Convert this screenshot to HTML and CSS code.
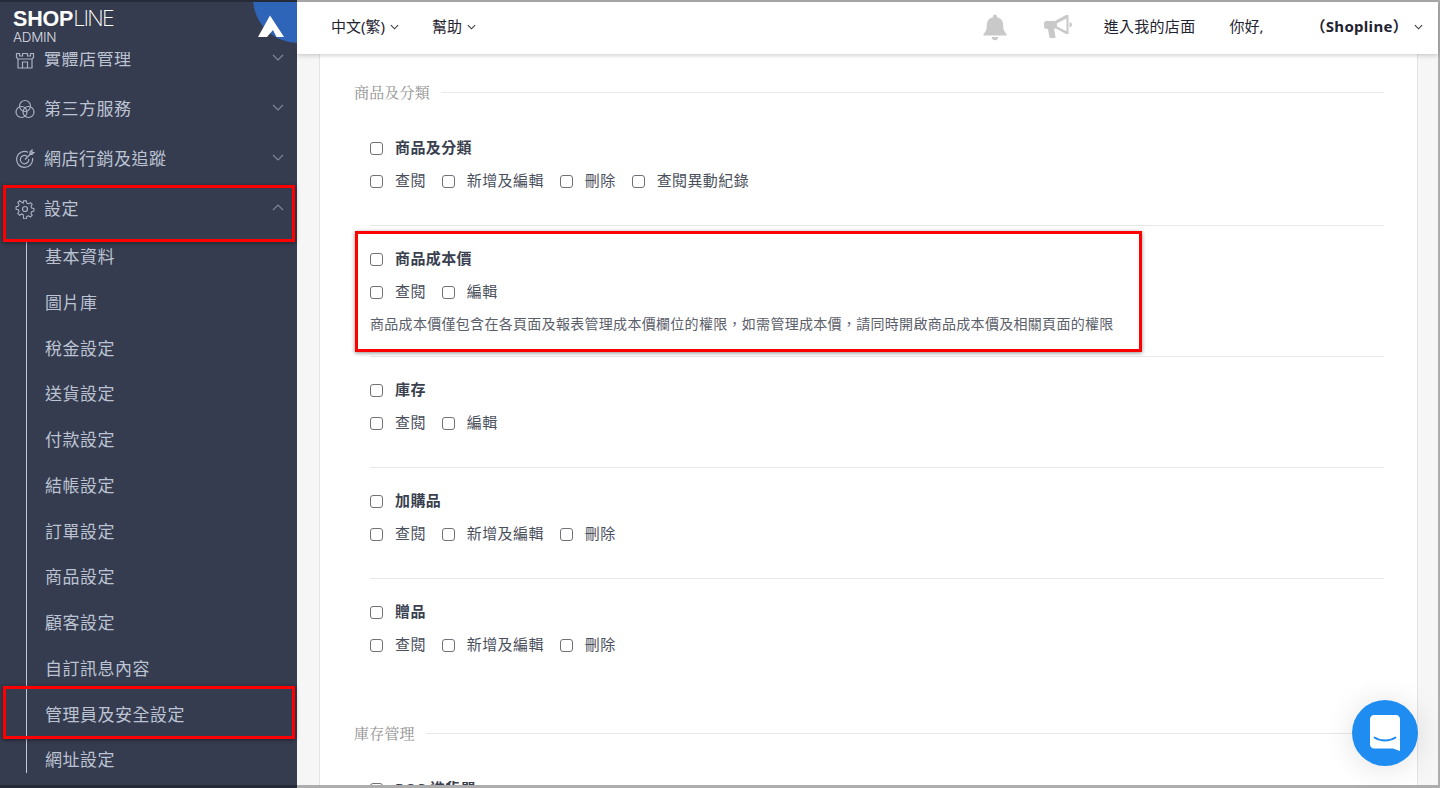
FILE: index.html
```html
<!DOCTYPE html>
<html lang="zh-Hant">
<head>
<meta charset="utf-8">
<title>SHOPLINE Admin</title>
<link rel="stylesheet" href="styles.css">
</head>
<body>
<div class="frame">
  <aside class="sidebar">
    <div class="brand">
      <div class="wordmark"><span class="wm-bold">SHOP</span><span class="wm-light">LINE</span></div>
      <div class="admin">ADMIN</div>
      <svg class="corner" width="60" height="50" viewBox="0 0 60 50">
        <circle cx="61" cy="-4" r="45" fill="#2f65b8"/>
        <path d="M21 35 L33 13.500 L47 35 H39.500 L36 28 L30 35 Z" fill="#fff"/>
      </svg>
    </div>
    <nav class="nav">
      <div class="item">
        <svg class="ico" viewBox="0 0 20 20"><path d="M1.500 4.500h3v2.500h3V4.500h5V7h3V4.500h3v4l-1.500 1.500v9h-14v-9l-1.500-1.500zM3 10h14M7.500 19v-6h5v6"/></svg>
        <span class="item-label">實體店管理</span>
        <svg class="chev" viewBox="0 0 12 7"><path d="M1 1l5 5 5-5"/></svg>
      </div>
      <div class="item">
        <svg class="ico" viewBox="0 0 20 20"><circle cx="10" cy="7" r="5.500"/><circle cx="6.500" cy="13" r="5.500"/><circle cx="13.500" cy="13" r="5.500"/></svg>
        <span class="item-label">第三方服務</span>
        <svg class="chev" viewBox="0 0 12 7"><path d="M1 1l5 5 5-5"/></svg>
      </div>
      <div class="item">
        <svg class="ico" viewBox="0 0 20 20"><path d="M13 3.200A8 8 0 1 0 17.500 9M12 7.200A4.200 4.200 0 1 0 13.700 10M10 10.500l7-7M15 5.500V3l2-2v2.500h2l-2 2z"/></svg>
        <span class="item-label">網店行銷及追蹤</span>
        <svg class="chev" viewBox="0 0 12 7"><path d="M1 1l5 5 5-5"/></svg>
      </div>
      <div class="item">
        <svg class="ico" viewBox="0 0 20 20"><circle cx="10" cy="10" r="2.500"/><path d="M8.500 1.500h3l.5 2.500 1.800.8 2.200-1.400 2 2-1.400 2.200.8 1.800 2.500.5v3l-2.500.5-.8 1.800 1.400 2.200-2 2-2.200-1.400-1.800.8-.5 2.500h-3L8 16.800 6.200 16 4 17.400l-2-2 1.400-2.200L2.600 11.400.1 10.900v-3l2.500-.5.800-1.800L2 3.400l2-2 2.200 1.400L8 4z" transform="translate(1 0) scale(.9 .9) translate(0 .6)"/></svg>
        <span class="item-label">設定</span>
        <svg class="chev" viewBox="0 0 12 7"><path d="M1 6l5-5 5 5"/></svg>
      </div>
      <ul class="sub">
        <li>基本資料</li>
        <li>圖片庫</li>
        <li>稅金設定</li>
        <li>送貨設定</li>
        <li>付款設定</li>
        <li>結帳設定</li>
        <li>訂單設定</li>
        <li>商品設定</li>
        <li>顧客設定</li>
        <li>自訂訊息內容</li>
        <li>管理員及安全設定</li>
        <li>網址設定</li>
      </ul>
    </nav>
  </aside>

  <div class="main">
    <header class="topbar">
      <div class="top-left">
        <span class="top-link"><span class="ttext">中文(繁)</span><svg class="tchev" viewBox="0 0 10 6"><path d="M1 1l4 4 4-4"/></svg></span>
        <span class="top-link"><span class="ttext">幫助</span><svg class="tchev" viewBox="0 0 10 6"><path d="M1 1l4 4 4-4"/></svg></span>
      </div>
      <div class="top-right">
        <svg class="bell" width="24" height="28" viewBox="0 0 24 28"><path d="M12 1.500c1.200 0 2 .8 2 2v.7c4 .9 6.200 4 6.200 8 0 5 1.300 6.500 3.300 8.800v1.500H.5v-1.500c2-2.300 3.300-3.800 3.300-8.800 0-4 2.200-7.100 6.200-8v-.7c0-1.200.8-2 2-2zM8.800 24h6.400c0 2-1.400 3.300-3.200 3.300S8.800 26 8.800 24z"/></svg>
        <svg class="horn" width="28" height="26" viewBox="0 0 28 26"><path d="M0 9.500c0-1.500 1-2.500 2.500-2.500H11L22 1h2.500v19H22l-10-5.500-2 .3 1.500 7.700c.2 1-.5 1.500-1.500 1.500H7c-1 0-1.500-.5-1.700-1.500L4 15H2.500C1 15 0 14 0 12.500zM22.500 4.500L13 9.200v3.300l9.500 4.700zM25.500 8c1.500.5 2.500 1.300 2.500 2.700s-1 2.300-2.500 2.800z" fill-rule="evenodd"/></svg>
        <span class="ttext store-link">進入我的店面</span>
        <span class="ttext hello">你好,</span>
        <span class="ttext user">（Shopline）</span>
        <svg class="tchev" viewBox="0 0 10 6"><path d="M1 1l4 4 4-4"/></svg>
      </div>
    </header>

    <div class="content">
      <div class="card">
        <div class="section-title">商品及分類</div>

        <div class="group group-first">
          <label class="row row-head"><input type="checkbox"><span>商品及分類</span></label>
          <div class="row">
            <label class="opt"><input type="checkbox"><span>查閱</span></label>
            <label class="opt"><input type="checkbox"><span>新增及編輯</span></label>
            <label class="opt"><input type="checkbox"><span>刪除</span></label>
            <label class="opt"><input type="checkbox"><span>查閱異動紀錄</span></label>
          </div>
        </div>

        <div class="group group-note">
          <label class="row row-head"><input type="checkbox"><span>商品成本價</span></label>
          <div class="row">
            <label class="opt"><input type="checkbox"><span>查閱</span></label>
            <label class="opt"><input type="checkbox"><span>編輯</span></label>
          </div>
          <p class="note">商品成本價僅包含在各頁面及報表管理成本價欄位的權限，如需管理成本價，請同時開啟商品成本價及相關頁面的權限</p>
        </div>

        <div class="group">
          <label class="row row-head"><input type="checkbox"><span>庫存</span></label>
          <div class="row">
            <label class="opt"><input type="checkbox"><span>查閱</span></label>
            <label class="opt"><input type="checkbox"><span>編輯</span></label>
          </div>
        </div>

        <div class="group">
          <label class="row row-head"><input type="checkbox"><span>加購品</span></label>
          <div class="row">
            <label class="opt"><input type="checkbox"><span>查閱</span></label>
            <label class="opt"><input type="checkbox"><span>新增及編輯</span></label>
            <label class="opt"><input type="checkbox"><span>刪除</span></label>
          </div>
        </div>

        <div class="group group-last">
          <label class="row row-head"><input type="checkbox"><span>贈品</span></label>
          <div class="row">
            <label class="opt"><input type="checkbox"><span>查閱</span></label>
            <label class="opt"><input type="checkbox"><span>新增及編輯</span></label>
            <label class="opt"><input type="checkbox"><span>刪除</span></label>
          </div>
        </div>

        <div class="section-title">庫存管理</div>

        <div class="group group-first">
          <label class="row row-head"><input type="checkbox"><span>POS 進貨單</span></label>
        </div>
      </div>
    </div>
  </div>

  <div class="mark mark-settings"></div>
  <div class="mark mark-admin"></div>
  <div class="mark mark-cost"></div>

  <div class="chat">
    <svg width="30" height="36" viewBox="0 0 30 36"><path d="M4 0h22c2.200 0 4 1.800 4 4v32l-7-2.500H4c-2.200 0-4-1.800-4-4V4c0-2.200 1.800-4 4-4z" fill="#fff"/><path d="M4.500 22.500c6 4 15 4 21 0" fill="none" stroke="#1e8cf0" stroke-width="1.800" stroke-linecap="round"/></svg>
  </div>
</div>
</body>
</html>
```

FILE: styles.css
```css
* { box-sizing: border-box; }

html, body {
  margin: 0;
  height: 100%;
  overflow: hidden;
}

body {
  font-family: "Noto Sans", "Noto Sans CJK TC", sans-serif;
  color: #3a3f4f;
}

.frame {
  position: relative;
  display: flex;
  width: 1440px;
  height: 788px;
  padding: 2px 2px 3px 0;
  background: linear-gradient(to right, #262b3a 297px, #adadad 297px);
  overflow: hidden;
}

/* Sidebar */
.sidebar {
  flex: 0 0 297px;
  background: #363c4f;
  overflow: hidden;
  color: #bcc3d3;
}

.brand {
  position: relative;
  z-index: 2;
  height: 50px;
  padding: 6px 0 0 13px;
  background: #363c4f;
}

.wordmark {
  font-family: "Liberation Sans", sans-serif;
  font-size: 21.500px;
  line-height: 20px;
  color: #fff;
  letter-spacing: -.2px;
  white-space: nowrap;
}

.wm-bold { font-weight: 700; }
.wm-light { font-family: "Inter", sans-serif; font-weight: 200; letter-spacing: -1.700px; }

.admin {
  margin-top: 2px;
  font-family: "Inter", sans-serif;
  font-size: 13.500px;
  font-weight: 300;
  line-height: 13px;
  color: #d9dce3;
  letter-spacing: -.3px;
}

.corner {
  position: absolute;
  top: 0;
  right: 0;
}

.nav {
  margin-top: -20px;
}

.item {
  display: flex;
  align-items: center;
  height: 50px;
  padding: 0 13px 0 15px;
  font-size: 17px;
  letter-spacing: .5px;
}

.ico {
  flex: none;
  width: 20px;
  height: 20px;
  margin: 4px 9px 0 0;
  fill: none;
  stroke: #aab1c2;
  stroke-width: 1.200;
}

.item-label { flex: 1; }

.chev {
  flex: none;
  width: 12px;
  height: 7px;
  fill: none;
  stroke: #7f8699;
  stroke-width: 1.200;
}

.sub {
  position: relative;
  height: 539px;
  margin: 2px 0 0 26px;
  padding: 0;
  list-style: none;
}

.sub::before {
  content: "";
  position: absolute;
  top: 7px;
  bottom: 0;
  left: 0;
  width: 1px;
  background: #c4c9d4;
}

.sub li {
  height: 45.750px;
  line-height: 45.750px;
  padding-left: 19px;
  font-size: 17px;
  letter-spacing: .5px;
  white-space: nowrap;
}

/* Main */
.main {
  flex: 1;
  display: flex;
  flex-direction: column;
  min-width: 0;
}

.topbar {
  position: relative;
  z-index: 1;
  display: flex;
  justify-content: space-between;
  align-items: center;
  flex: 0 0 52px;
  padding: 0 15px 2px 34px;
  background: #fff;
  box-shadow: 0 1px 5px rgba(0, 0, 0, .22);
  font-size: 15px;
  color: #1f2330;
}

.top-left, .top-right {
  display: flex;
  align-items: center;
}

.top-left { gap: 33px; }

.top-link {
  display: flex;
  align-items: center;
  gap: 5px;
}

.ttext {
  padding-bottom: 4px;
  white-space: nowrap;
}

.tchev {
  width: 9px;
  height: 6px;
  fill: none;
  stroke: #33373f;
  stroke-width: 1.200;
}

.bell { fill: #c9c9c9; margin-right: 37px; }
.horn { fill: #c9c9c9; margin-right: 32px; }
.store-link { letter-spacing: .3px; margin-right: 34px; }
.hello { margin-right: 47px; width: 34px; }
.user { font-weight: 700; margin-right: 6px; letter-spacing: .3px; }

.content {
  flex: 1;
  min-height: 0;
  padding: 0 20px 0 22px;
  background: #f6f6f6;
  overflow: hidden;
}

.card {
  padding: 27px 33px 0 34px;
  min-height: 100%;
  background: #fff;
  border-left: 1px solid #e4e4e4;
  border-right: 1px solid #e4e4e4;
}

.section-title {
  display: flex;
  align-items: center;
  gap: 11px;
  font-family: "Noto Serif CJK TC", "Liberation Serif", serif;
  font-size: 15px;
  line-height: 22px;
  letter-spacing: .2px;
  color: #909090;
}

.section-title::after {
  content: "";
  flex: 1;
  height: 1px;
  background: #e8e8e8;
}

.group {
  margin-left: 16px;
  padding: 22px 0 33px;
  border-bottom: 1px solid #e8e8e8;
}

.group-first { padding-top: 34px; }
.group-note { padding-bottom: 21px; }
.group-last { padding-bottom: 66px; border-bottom: 0; }

.row {
  display: flex;
  align-items: center;
  height: 22px;
  font-size: 15px;
  letter-spacing: .4px;
  color: #4a4f5c;
}

.row span { padding-bottom: 4px; }

.row-head {
  margin-bottom: 11px;
  font-weight: 700;
  color: #3a3f4f;
}

.row-head input { margin-right: 12px; }

.opt {
  display: flex;
  align-items: center;
  margin-right: 16px;
}

.opt input { margin-right: 12px; }

input[type="checkbox"] {
  appearance: none;
  flex: none;
  width: 13px;
  height: 13px;
  margin-top: 0;
  margin-bottom: 0;
  margin-left: 0;
  background: #fff;
  border: 1px solid #6f7278;
  border-radius: 3px;
}

.note {
  margin: 10px 0 0;
  font-size: 14px;
  line-height: 22px;
  letter-spacing: .3px;
  color: #5c606b;
  white-space: nowrap;
}

/* Overlays */
.mark {
  position: absolute;
  z-index: 3;
  border: 3px solid #f00;
  box-shadow: 0 1px 4px rgba(0, 0, 0, .45);
}

.mark-settings { left: 3px; top: 185px; width: 292px; height: 57px; }
.mark-admin { left: 3px; top: 686px; width: 292px; height: 53px; }
.mark-cost { left: 355px; top: 231px; width: 787px; height: 121px; }

.chat {
  position: absolute;
  z-index: 4;
  left: 1352px;
  top: 700px;
  display: flex;
  align-items: center;
  justify-content: center;
  width: 66px;
  height: 66px;
  border-radius: 50%;
  background: #1e8cf0;
  box-shadow: 0 2px 30px rgba(0, 0, 0, .12);
}
```
